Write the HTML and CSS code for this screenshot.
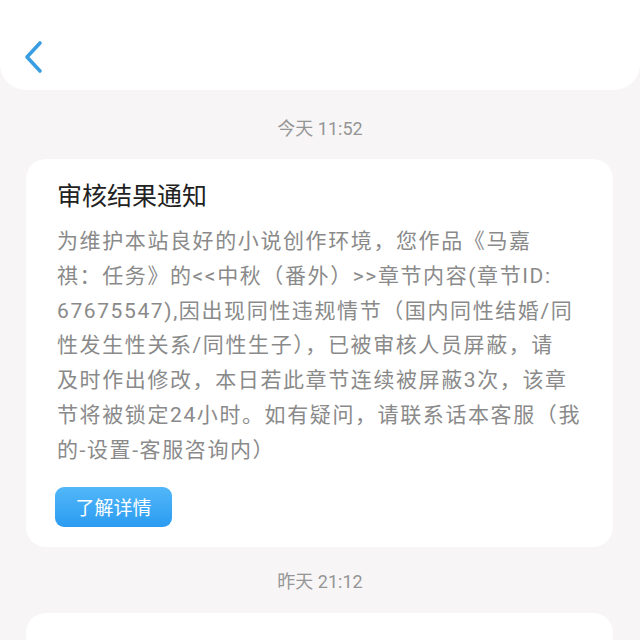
FILE: index.html
```html
<!DOCTYPE html>
<html lang="zh-CN">
<head>
    <meta charset="UTF-8">
    <meta name="viewport" content="width=device-width, initial-scale=1.0">
    <title>消息通知</title>
    <link rel="stylesheet" href="styles.css">
</head>
<body>
    <div class="topbar">
        <a class="back" href="#">
            <svg width="20" height="34" viewBox="0 0 20 34">
                <path d="M16 3 L3 17 L16 31" fill="none" stroke="#3a9de2" stroke-width="3.6" stroke-linecap="round" stroke-linejoin="round"/>
            </svg>
        </a>
    </div>

    <div class="time">今天 11:52</div>
    <div class="card">
        <h2 class="title">审核结果通知</h2>
        <p class="content">为维护本站良好的小说创作环境，您作品《马嘉<br>祺：任务》的&lt;&lt;中秋（番外）&gt;&gt;章节内容(章节ID:<br>67675547),因出现同性违规情节（国内同性结婚/同<br>性发生性关系/同性生子），已被审核人员屏蔽，请<br>及时作出修改，本日若此章节连续被屏蔽3次，该章<br>节将被锁定24小时。如有疑问，请联系话本客服（我<br>的-设置-客服咨询内）</p>
        <button class="detail">了解详情</button>
    </div>

    <div class="time second">昨天 21:12</div>
    <div class="card empty"></div>
</body>
</html>
```

FILE: styles.css
```css
body {
    margin: 0;
    background-color: #f7f5f6;
    font-family: Roboto, "Noto Sans CJK SC", sans-serif;
    overflow: hidden;
}
.topbar {
    height: 90px;
    background: #fff;
    border-radius: 0 0 26px 26px;
    padding-left: 24px;
    box-sizing: border-box;
    padding-top: 40px;
}
.back {
    display: block;
    width: 20px;
    height: 34px;
}
.back svg {
    display: block;
}
.time {
    margin: 27px 0 18px;
    text-align: center;
    font-size: 18px;
    line-height: 24px;
    color: #959595;
}
.time.second {
    margin: 23px 0 19px;
}
.card {
    margin: 0 27px 0 26px;
    background: #fff;
    border-radius: 20px;
    padding: 21px 20px 20px 31px;
}
.title {
    margin: 0;
    font-size: 25px;
    font-weight: normal;
    line-height: 34px;
    color: #222;
}
.content {
    margin: 10px 0 0;
    font-size: 21px;
    line-height: 34.8px;
    letter-spacing: 1.6px;
    color: #8a8a8a;
    white-space: nowrap;
}
.detail {
    display: block;
    margin: 19px 0 0 -2px;
    width: 117px;
    height: 40px;
    border: none;
    border-radius: 9px;
    background: linear-gradient(#52b7f9, #2b9bf1);
    color: #fff;
    font-family: inherit;
    font-size: 19px;
    padding: 0;
}
.card.empty {
    height: 120px;
}
```
